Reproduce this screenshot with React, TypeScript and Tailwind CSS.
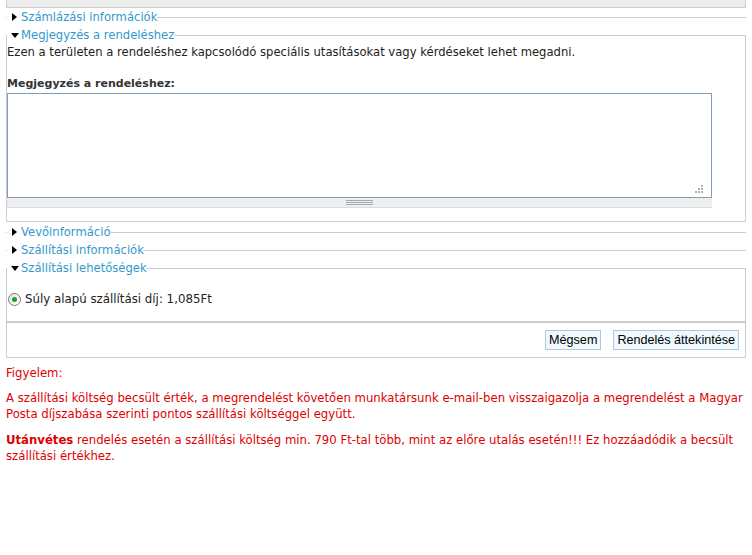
import React from 'react';

const font = { fontFamily: '"DejaVu Sans", Verdana, sans-serif' };

function TriRight() {
  return (
    <svg width="5" height="8" viewBox="0 0 5 8" className="mr-[4px] shrink-0">
      <path d="M0 0 L5 4 L0 8 Z" fill="#000" />
    </svg>
  );
}

function TriDown() {
  return (
    <svg width="8" height="5" viewBox="0 0 8 5" className="mr-[2px] shrink-0">
      <path d="M0 0 L8 0 L4 5 Z" fill="#000" />
    </svg>
  );
}

function Collapsed({ title, className }: { title: string; className: string }) {
  return (
    <fieldset className={'border-t border-[#cccccc] ' + className}>
      <legend className="ml-[1px] pl-[5px] flex items-center h-[14px] text-[11.6px] leading-[14px] text-[#3399cc]">
        <TriRight />
        {title}
      </legend>
    </fieldset>
  );
}

function OpenLegend({ title }: { title: string }) {
  return (
    <legend className="pl-[4px] flex items-center h-[14px] text-[11.6px] leading-[14px] text-[#3399cc]">
      <TriDown />
      {title}
    </legend>
  );
}

export default function App() {
  return (
    <div className="bg-white w-[752px] h-[555px] px-[6px] text-[11.6px] text-[#222]" style={font}>
      <div className="h-[8px] bg-[#eeeeee] border-x border-b border-[#cccccc]" />

      <Collapsed title="Számlázási információk" className="mt-[2px]" />

      <fieldset className="border border-[#cccccc] mt-[4px] pb-[13px]">
        <OpenLegend title="Megjegyzés a rendeléshez" />
        <p className="leading-[14px] mt-[3px]">
          Ezen a területen a rendeléshez kapcsolódó speciális utasításokat vagy kérdéseket lehet megadni.
        </p>
        <label className="block font-bold text-[11px] text-[#333] mt-[18px] leading-[14px]">Megjegyzés a rendeléshez:</label>
        <div className="relative w-[705px] mt-[2px]">
          <textarea className="block w-full h-[105px] border border-[#7f9db9] resize-none outline-none" />
          <svg width="9" height="9" viewBox="0 0 9 9" className="absolute right-[8px] top-[92px]">
            <rect x="6" y="0" width="2" height="2" fill="#b3b39c" />
            <rect x="3" y="3" width="2" height="2" fill="#b3b39c" />
            <rect x="6" y="3" width="2" height="2" fill="#b3b39c" />
            <rect x="0" y="6" width="2" height="2" fill="#b3b39c" />
            <rect x="3" y="6" width="2" height="2" fill="#b3b39c" />
            <rect x="6" y="6" width="2" height="2" fill="#b3b39c" />
          </svg>
          <div className="h-[10px] bg-[#eeeeee] border-b border-[#dddddd] flex items-center justify-center">
            <div className="flex flex-col gap-[1px]">
              <div className="w-[27px] h-[1px] bg-[#aaaaaa]" />
              <div className="w-[27px] h-[1px] bg-[#aaaaaa]" />
              <div className="w-[27px] h-[1px] bg-[#aaaaaa]" />
            </div>
          </div>
        </div>
      </fieldset>

      <div>
        <Collapsed title="Vevőinformáció" className="mt-[3px]" />
        <Collapsed title="Szállítási információk" className="mt-[4px]" />
      </div>

      <fieldset className="border-x border-t border-[#cccccc] mt-[4px] h-[60px]">
        <OpenLegend title="Szállítási lehetőségek" />
        <div className="flex items-center mt-[16px]">
          <span className="ml-[1px] w-[13px] h-[13px] rounded-full border border-[#7b7b7b] bg-gradient-to-br from-[#e4e4e4] to-white flex items-center justify-center">
            <span className="w-[5px] h-[5px] rounded-full bg-[#21a121]" />
          </span>
          <span className="ml-[4px] text-[11.8px]">Súly alapú szállítási díj: 1,085Ft</span>
        </div>
      </fieldset>

      <div className="border border-[#cccccc] border-t-2 h-[37px] flex items-center justify-end gap-[12px] pr-[6px]">
        <button
          className="h-[20px] px-[3px] bg-[#eef9fd] border border-[#b6c6d6] text-[12.6px] text-black"
          style={{ fontFamily: '"Liberation Sans", Arial, sans-serif' }}
        >
          Mégsem
        </button>
        <button
          className="h-[20px] px-[3px] bg-[#eef9fd] border border-[#b6c6d6] text-[12.6px] text-black"
          style={{ fontFamily: '"Liberation Sans", Arial, sans-serif' }}
        >
          Rendelés áttekintése
        </button>
      </div>

      <div className="text-[#e00000] text-[11.7px] leading-[16px]">
        <p className="mt-[7px]">Figyelem:</p>
        <p className="mt-[9px]">
          A szállítási költség becsült érték, a megrendelést követően munkatársunk e-mail-ben visszaigazolja a megrendelést a Magyar Posta díjszabása szerinti pontos szállítási költséggel együtt.
        </p>
        <p className="mt-[10px]">
          <b>Utánvétes</b> rendelés esetén a szállítási költség min. 790 Ft-tal több, mint az előre utalás esetén!!! Ez hozzáadódik a becsült szállítási értékhez.
        </p>
      </div>
    </div>
  );
}
